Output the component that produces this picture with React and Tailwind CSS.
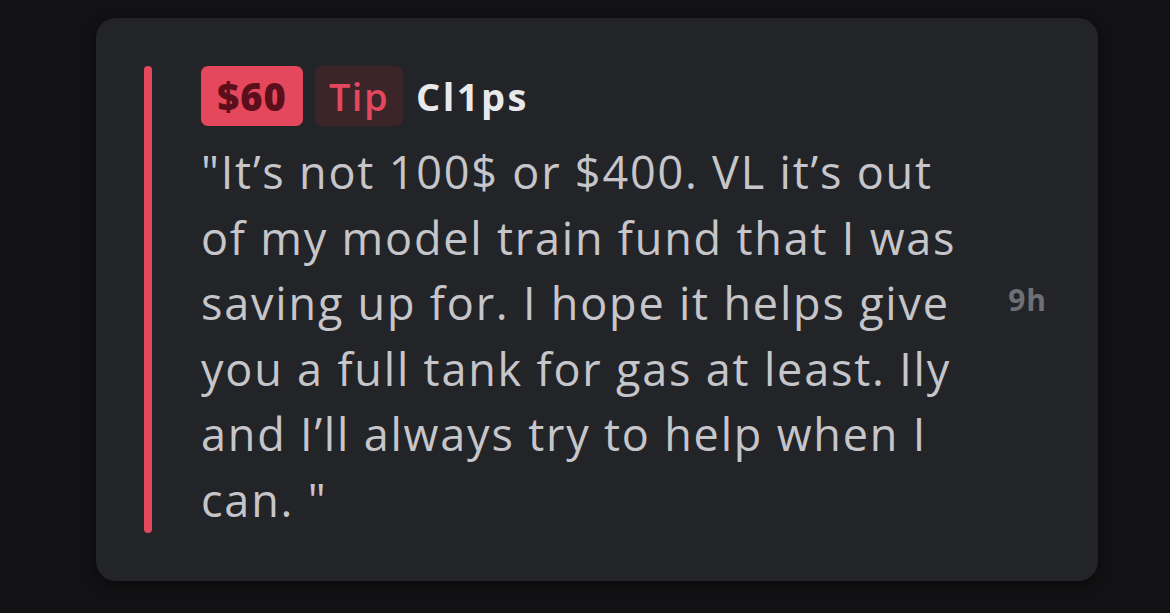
import React from 'react';

const lines = [
  '"It’s not 100$ or $400. VL it’s out',
  'of my model train fund that I was',
  'saving up for. I hope it helps give',
  'you a full tank for gas at least. Ily',
  'and I’ll always try to help when I',
  'can. "',
];

const App = () => {
  return (
    <div
      className="min-h-screen w-full bg-[#121214] pt-[18px] pl-[96px]"
      style={{ fontFamily: '"Open Sans", Lato, sans-serif' }}
    >
      <div className="w-[1002px] h-[563px] rounded-[20px] bg-[#232428] shadow-[0_4px_14px_rgba(0,0,0,0.45)] flex items-center pl-[48px] pr-[51px]">
        <div className="flex self-stretch py-[48px]">
          <div className="w-[8px] rounded-full bg-[#e5485c]" />
          <div className="ml-[49px] flex flex-col">
            <div className="flex items-center h-[60px]">
              <span className="h-[60px] w-[102px] rounded-[7px] bg-[#e5485c] text-[#5b0f1b] text-[38px] font-extrabold tracking-[1px] flex items-center justify-center leading-none">
                $60
              </span>
              <span className="ml-[12px] h-[60px] w-[88px] rounded-[7px] bg-[#3b2529] text-[#e5485c] text-[38px] font-semibold tracking-[1.5px] flex items-center justify-center leading-none">
                Tip
              </span>
              <span className="ml-[13px] text-[#e9e9ec] text-[38px] font-bold tracking-[2.5px] leading-none">Cl1ps</span>
            </div>
            <div className="mt-[13px] text-[#c6c6ca] text-[45px] leading-[65.5px] tracking-[1.8px]">
              {lines.map((l) => (
                <div key={l} className="whitespace-nowrap">{l}</div>
              ))}
            </div>
          </div>
        </div>
        <div className="ml-auto text-[#6f7075] text-[30px] font-bold tracking-[1px]">9h</div>
      </div>
    </div>
  );
};

export default App;
